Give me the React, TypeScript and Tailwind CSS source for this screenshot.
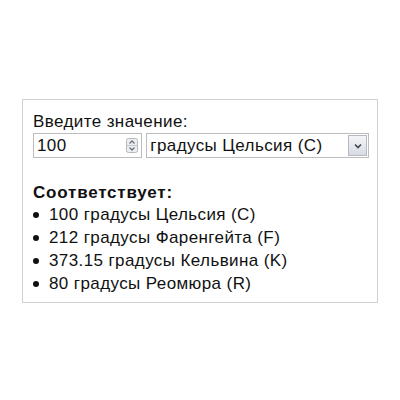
import React from 'react';

const results = [
  '100 градусы Цельсия (C)',
  '212 градусы Фаренгейта (F)',
  '373.15 градусы Кельвина (K)',
  '80 градусы Реомюра (R)',
];

export default function App() {
  return (
    <div className="w-[400px] h-[400px] bg-white pt-[99px] pl-[22px]" style={{ fontFamily: '"Liberation Sans", Arial, sans-serif' }}>
      <div className="w-[356px] h-[204px] border border-[#d0d0d0] pl-[10px] pr-[8px] pt-[12px] text-[17px] tracking-[0.4px] text-[#111]">
        <div className="leading-[20px]">Введите значение:</div>
        <div className="flex items-center gap-[4px] mt-[1px]">
          <div className="w-[110px] h-[25px] border border-[#bdbdbd] flex items-center pl-[3px] pr-[3px]">
            <span className="flex-1 leading-[20px]">100</span>
            <svg width="12" height="15" viewBox="0 0 12 15">
              <rect x="0.5" y="0.5" width="11" height="14" rx="2" fill="#eceef2" stroke="#b6b9c0" />
              <line x1="1" y1="7.5" x2="11" y2="7.5" stroke="#c4c7cd" />
              <path d="M3.5 5.5 L6 3 L8.5 5.5" fill="none" stroke="#6a6f78" strokeWidth="1.3" />
              <path d="M3.5 9.5 L6 12 L8.5 9.5" fill="none" stroke="#6a6f78" strokeWidth="1.3" />
            </svg>
          </div>
          <div className="w-[224px] h-[25px] border border-[#bdbdbd] flex items-center pl-[3px] pr-[1px]">
            <span className="flex-1 leading-[20px]">градусы Цельсия (C)</span>
            <div className="w-[19px] h-[21px] border border-[#b6b9c0] bg-gradient-to-b from-[#f4f5f8] to-[#d8dbe3] flex items-center justify-center">
              <svg width="8" height="6" viewBox="0 0 8 6">
                <path d="M1 1.5 L4 4.5 L7 1.5" fill="none" stroke="#404550" strokeWidth="1.6" />
              </svg>
            </div>
          </div>
        </div>
        <div className="mt-[25px] font-bold leading-[20px] tracking-[0.8px]">Соответствует:</div>
        <ul className="mt-[0px]">
          {results.map((r) => (
            <li key={r} className="leading-[23px] flex items-center">
              <span className="w-[16px] flex pt-[1px]">
                <span className="w-[6px] h-[6px] rounded-full bg-[#111]" />
              </span>
              <span>{r}</span>
            </li>
          ))}
        </ul>
      </div>
    </div>
  );
}
